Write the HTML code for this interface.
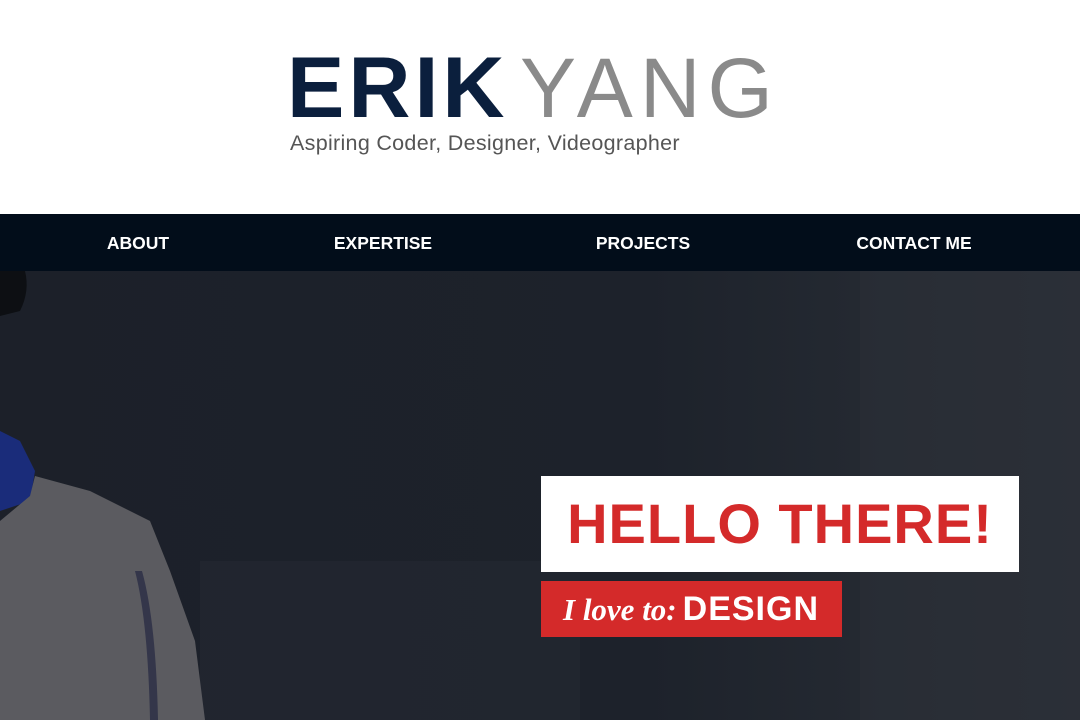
<!DOCTYPE html>
<html><head><meta charset="utf-8"><style>
*{margin:0;padding:0;box-sizing:border-box}
body{width:1080px;height:720px;overflow:hidden;background:#fff;font-family:"Liberation Sans",sans-serif;position:relative}
.erik{position:absolute;left:287px;top:38px;font-size:86px;font-weight:bold;color:#0b1f3d;line-height:100px;letter-spacing:4px}
.yang{position:absolute;left:520px;top:38px;font-size:84px;font-weight:normal;color:#8a8a8a;line-height:100px;letter-spacing:7px}
.sub{position:absolute;left:290px;top:130px;font-size:21.5px;color:#555;line-height:26px;letter-spacing:0.3px}
nav{position:absolute;left:0;top:214px;width:1080px;height:57px;background:#020d1a}
nav span{position:absolute;top:19px;color:#fff;font-weight:bold;font-size:17.5px;transform:translateX(-50%);white-space:nowrap}
.hero{position:absolute;left:0;top:271px;width:1080px;height:449px;background:linear-gradient(90deg,#1c2029 0%,#1d222b 60%,#262b33 85%,#2a2f37 100%)}
.hello{position:absolute;left:541px;top:476px;width:478px;height:96px;background:#fff;color:#d42a2a;font-weight:bold;font-size:56px;text-align:center;line-height:96px;letter-spacing:1px}
.love{position:absolute;left:541px;top:581px;width:301px;height:56px;background:#d42a2a;color:#fff;line-height:56px;padding-left:22px;white-space:nowrap}
.love i{font-family:"Liberation Serif",serif;font-size:31px;font-weight:bold}
.love b{font-size:34px;margin-left:6px;letter-spacing:1px}
</style></head><body>
<div class="erik">ERIK</div>
<div class="yang">YANG</div>
<div class="sub">Aspiring Coder, Designer, Videographer</div>
<nav><span style="left:138px">ABOUT</span><span style="left:383px">EXPERTISE</span><span style="left:643px">PROJECTS</span><span style="left:914px">CONTACT ME</span></nav>
<div class="hero">
<svg width="1080" height="449" style="position:absolute;left:0;top:0">
<rect x="860" y="0" width="220" height="449" fill="#2b3038" opacity="0.5"/>
<rect x="200" y="290" width="380" height="159" fill="#252a33" opacity="0.5"/>
<path d="M0 0 L25 0 Q30 20 20 40 L0 45Z" fill="#0d0f13"/>
<path d="M0 160 L20 170 L35 200 L30 230 L0 240Z" fill="#1a2c7a"/>
<path d="M0 250 L30 225 L35 205 L90 220 L150 250 L170 300 L195 370 L205 449 L0 449Z" fill="#5b5b60"/>
<path d="M135 300 Q148 350 150 449 L158 449 Q156 350 142 300Z" fill="#34364a"/>
</svg>
</div>
<div class="hello">HELLO THERE!</div>
<div class="love"><i>I love to:</i><b>DESIGN</b></div>
</body></html>
